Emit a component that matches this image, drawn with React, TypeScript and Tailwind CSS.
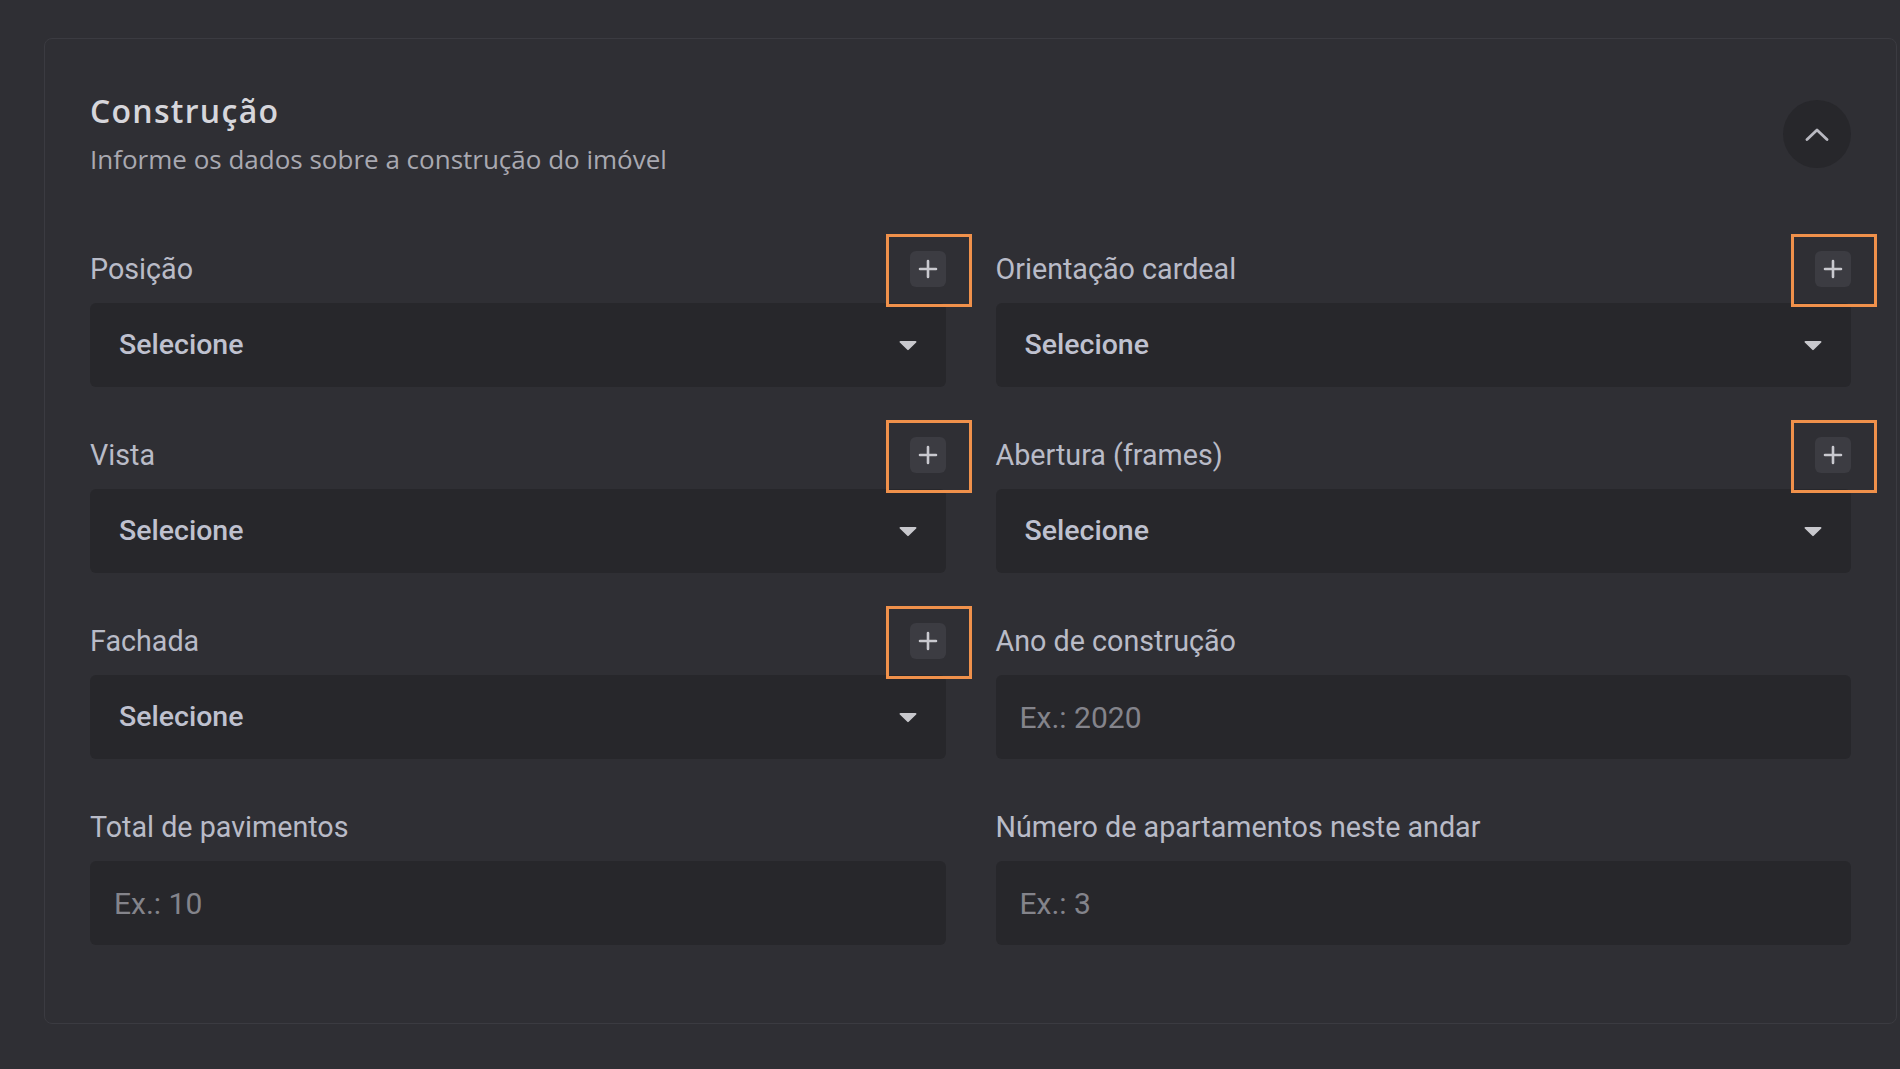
import React from "react";

type Field = {
  label: string;
  kind: "select" | "input";
  placeholder?: string;
  addable?: boolean;
};

const fields: Field[] = [
  { label: "Posição", kind: "select", addable: true },
  { label: "Orientação cardeal", kind: "select", addable: true },
  { label: "Vista", kind: "select", addable: true },
  { label: "Abertura (frames)", kind: "select", addable: true },
  { label: "Fachada", kind: "select", addable: true },
  { label: "Ano de construção", kind: "input", placeholder: "Ex.: 2020" },
  { label: "Total de pavimentos", kind: "input", placeholder: "Ex.: 10" },
  { label: "Número de apartamentos neste andar", kind: "input", placeholder: "Ex.: 3" },
];

function AddButton() {
  return (
    <div className="relative">
      {/* highlight frame drawn over the button */}
      <span className="pointer-events-none absolute -left-[24px] -right-[26px] -top-[17px] -bottom-[20px] border-[3px] border-[#f0914b]" />
      <button
        type="button"
        className="flex h-[36px] w-[36px] items-center justify-center rounded-md bg-[#3c3c42]"
      >
        <svg width="20" height="20" viewBox="0 0 20 20" fill="none">
          <path d="M10 2v16M2 10h16" stroke="#c9c9cf" strokeWidth="2.6" strokeLinecap="round" />
        </svg>
      </button>
    </div>
  );
}

function Caret() {
  return (
    <svg width="18" height="11" viewBox="0 0 18 11" fill="none">
      <path d="M1.5 1h15c.9 0 1.3 1 .7 1.6L9.7 9.8a1 1 0 0 1-1.4 0L.8 2.6C.2 2 .6 1 1.5 1z" fill="#c8c8cd" />
    </svg>
  );
}

function FieldBlock({ field }: { field: Field }) {
  return (
    <div className="flex flex-col">
      <div className="flex h-[40px] items-center justify-between">
        <span className="text-[28.7px] leading-[36px] text-[#b9bbc7]">{field.label}</span>
        {field.addable && <AddButton />}
      </div>
      {field.kind === "select" ? (
        <div className="mt-[14px] flex h-[84px] items-center justify-between rounded-md bg-[#27272b] pl-[29px] pr-[29px]">
          <span className="text-[28.5px] font-medium text-[#bfc1cf]">Selecione</span>
          <Caret />
        </div>
      ) : (
        <input
          type="text"
          placeholder={field.placeholder}
          className="mt-[14px] h-[84px] rounded-md bg-[#27272b] px-6 text-[30px] text-[#bfc1cf] outline-none placeholder:text-[#84848b]"
        />
      )}
    </div>
  );
}

export default function App() {
  return (
    <div
      className="min-h-[1069px] w-full bg-[#2f2f34] pt-[38px]"
      style={{ fontFamily: "Roboto, 'Noto Sans', sans-serif" }}
    >
      <section className="ml-[44px] mr-[3px] rounded-lg border border-[#3b3b41] bg-[#2f2f34] px-[45px] pb-[78px] pt-[52px]">
        {/* Header */}
        <div className="flex items-start justify-between">
          <div className="flex flex-col" style={{ fontFamily: "'Open Sans', sans-serif" }}>
            <h2 className="text-[32px] font-semibold leading-[40px] tracking-[0.04em] text-[#d6d6db]">
              Construção
            </h2>
            <p className="mt-3 text-[26px] font-normal leading-[32px] text-[#a9a9b1]">
              Informe os dados sobre a construção do imóvel
            </p>
          </div>
          <button
            type="button"
            className="mt-[9px] flex h-[68px] w-[68px] items-center justify-center rounded-full bg-[#27272b]"
          >
            <svg width="24" height="13" viewBox="0 0 24 13" fill="none">
              <path d="M2 11.5 12 2l10 9.5" stroke="#b9b9c1" strokeWidth="2.8" strokeLinecap="round" strokeLinejoin="round" />
            </svg>
          </button>
        </div>

        {/* Fields */}
        <div className="mt-[74px] grid grid-cols-2 gap-x-[50px] gap-y-[48px]">
          {fields.map((f) => (
            <FieldBlock key={f.label} field={f} />
          ))}
        </div>
      </section>
    </div>
  );
}
